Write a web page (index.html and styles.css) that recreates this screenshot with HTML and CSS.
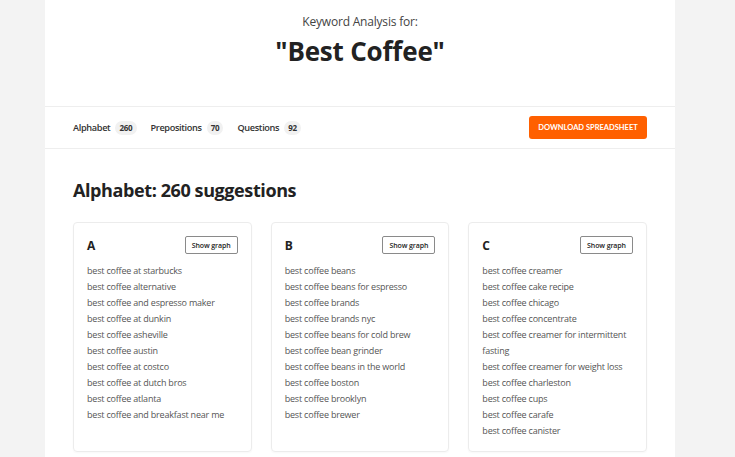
FILE: index.html
```html
<!DOCTYPE html>
<html lang="en">
<head>
<meta charset="utf-8">
<title>Keyword Analysis</title>
<link rel="stylesheet" href="styles.css">
</head>
<body>
<div class="page">
  <header class="hero">
    <p class="hero-sub">Keyword Analysis for:</p>
    <h1 class="hero-title">"Best Coffee"</h1>
  </header>
  <nav class="tabs">
    <div class="tab-list">
      <span class="tab">Alphabet <span class="badge">260</span></span>
      <span class="tab">Prepositions <span class="badge">70</span></span>
      <span class="tab">Questions <span class="badge">92</span></span>
    </div>
    <button class="download">DOWNLOAD SPREADSHEET</button>
  </nav>
  <main class="content">
    <h2 class="section-title">Alphabet: 260 suggestions</h2>
    <div class="cards">
      <section class="card">
        <div class="card-head"><span class="letter">A</span><button class="graph-btn">Show graph</button></div>
        <ul class="list">
          <li>best coffee at starbucks</li>
          <li>best coffee alternative</li>
          <li>best coffee and espresso maker</li>
          <li>best coffee at dunkin</li>
          <li>best coffee asheville</li>
          <li>best coffee austin</li>
          <li>best coffee at costco</li>
          <li>best coffee at dutch bros</li>
          <li>best coffee atlanta</li>
          <li>best coffee and breakfast near me</li>
        </ul>
      </section>
      <section class="card">
        <div class="card-head"><span class="letter">B</span><button class="graph-btn">Show graph</button></div>
        <ul class="list">
          <li>best coffee beans</li>
          <li>best coffee beans for espresso</li>
          <li>best coffee brands</li>
          <li>best coffee brands nyc</li>
          <li>best coffee beans for cold brew</li>
          <li>best coffee bean grinder</li>
          <li>best coffee beans in the world</li>
          <li>best coffee boston</li>
          <li>best coffee brooklyn</li>
          <li>best coffee brewer</li>
        </ul>
      </section>
      <section class="card">
        <div class="card-head"><span class="letter">C</span><button class="graph-btn">Show graph</button></div>
        <ul class="list">
          <li>best coffee creamer</li>
          <li>best coffee cake recipe</li>
          <li>best coffee chicago</li>
          <li>best coffee concentrate</li>
          <li>best coffee creamer for intermittent fasting</li>
          <li>best coffee creamer for weight loss</li>
          <li>best coffee charleston</li>
          <li>best coffee cups</li>
          <li>best coffee carafe</li>
          <li>best coffee canister</li>
        </ul>
      </section>
    </div>
  </main>
</div>
</body>
</html>
```
FILE: styles.css
```css
html, body {
  margin: 0;
  padding: 0;
  background: #f3f3f3;
  font-family: "Open Sans", "Noto Sans", sans-serif;
  color: #222;
}
.page {
  width: 630px;
  margin-left: 45px;
  background: #fff;
  min-height: 457px;
}
.hero {
  text-align: center;
  padding-top: 12px;
  height: 94px;
  border-bottom: 1px solid #eeeeee;
}
.hero-sub {
  margin: 0;
  font-size: 12px;
  line-height: 20px;
  letter-spacing: -0.2px;
  color: #444;
  font-weight: 400;
}
.hero-title {
  margin: 0;
  font-size: 26px;
  line-height: 38px;
  letter-spacing: -0.2px;
  font-weight: 700;
  color: #222;
}
.tabs {
  display: flex;
  align-items: center;
  justify-content: space-between;
  height: 41px;
  padding: 0 28px;
  border-bottom: 1px solid #eeeeee;
}
.tab-list {
  display: flex;
  gap: 14px;
}
.tab {
  font-size: 9.2px;
  letter-spacing: -0.35px;
  font-weight: 600;
  color: #333;
  display: flex;
  align-items: center;
  gap: 5px;
}
.badge {
  display: inline-block;
  background: #f1f1f1;
  border-radius: 8px;
  font-size: 8px;
  letter-spacing: -0.2px;
  font-weight: 700;
  line-height: 14px;
  padding: 0 4px;
  color: #333;
}
.download {
  background: #ff6000;
  color: #fff;
  border: none;
  border-radius: 3px;
  height: 23px;
  width: 118px;
  padding: 0;
  font-family: "Lato", sans-serif;
  font-size: 7.5px;
  font-weight: 700;
}
.content {
  padding: 28px 28px 0;
}
.section-title {
  margin: 0 0 19px;
  font-size: 18px;
  line-height: 26px;
  letter-spacing: -0.4px;
  font-weight: 700;
  color: #222;
}
.cards {
  display: grid;
  grid-template-columns: repeat(3, 1fr);
  gap: 19px;
}
.card {
  border: 1px solid #ececec;
  border-radius: 4px;
  padding: 13px 13px 12px;
  box-shadow: 0 1px 2px rgba(0,0,0,0.03);
}
.card-head {
  display: flex;
  justify-content: space-between;
  align-items: center;
  height: 18px;
  margin-bottom: 9px;
}
.letter {
  font-size: 12px;
  font-weight: 700;
  color: #222;
}
.graph-btn {
  background: #fff;
  border: 1px solid #8a8a8a;
  border-radius: 2px;
  height: 18px;
  width: 53px;
  padding: 0;
  font-family: "Open Sans", sans-serif;
  font-size: 7px;
  letter-spacing: -0.1px;
  font-weight: 600;
  color: #222;
}
.list {
  list-style: none;
  margin: 0;
  padding: 0;
}
.list li {
  font-size: 9px;
  letter-spacing: -0.2px;
  line-height: 16px;
  color: #555;
}
```
